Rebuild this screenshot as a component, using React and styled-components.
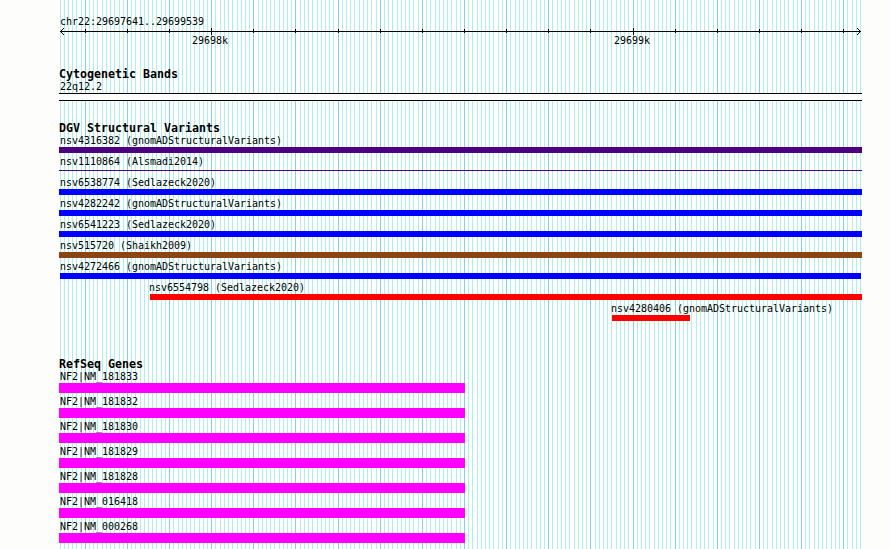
import React from 'react'
import styled, { createGlobalStyle } from 'styled-components'

const INK = '#000000'
const PAPER = '#fdfefb'
const GRID_MINOR = '#afeeee'
const GRID_MAJOR = '#87ceeb'
const LEFT = 59
const START = 29697641
const SCALE = 0.42127

const toX = bp => Math.floor(60.08 + (bp - START + 1) * SCALE)

const GlobalStyle = createGlobalStyle`
  body {
    margin: 0;
    background: ${PAPER};
    overflow: hidden;
  }
`
const Browser = styled.main`
  position: relative;
  width: 890px;
  height: 549px;
  overflow: hidden;
  background: ${PAPER};
  color: ${INK};
`
const Backdrop = styled.svg`
  position: absolute;
  top: 0;
  left: 0;
  shape-rendering: crispEdges;
`
const Tracks = styled.div`
  position: relative;
  display: flex;
  flex-direction: column;
  width: 803px;
  padding: 16px 0 0 ${LEFT}px;
`
const Label = styled.div`
  height: 12px;
  padding-left: 1px;
  font: 10px/12px 'DejaVu Sans Mono', monospace;
  letter-spacing: -0.02px;
  white-space: pre;
`
const Title = styled.h2`
  height: 13px;
  margin: 0;
  font: bold 11.63px/12px 'DejaVu Sans Mono', monospace;
  white-space: pre;
`
const Ruler = styled.section`
  height: 52px;
`
const Axis = styled.svg`
  display: block;
  margin-top: -1px;
  shape-rendering: crispEdges;
`
const Scale = styled.div`
  display: flex;
  gap: 385px;
  padding-left: 132px;
  margin-top: -1px;
`
const Bands = styled.section`
  height: 54px;
`
const Band = styled.div`
  height: 6px;
  border: solid ${INK};
  border-width: 1px 0;
  background: ${PAPER};
`
const Variants = styled.section`
  height: 236px;
`
const Variant = styled.div`
  height: 21px;
  padding-left: ${p => p.$offset || 0}px;
`
const Bar = styled.div`
  width: ${p => p.$width}px;
  height: ${p => p.$height}px;
  margin: ${p => p.$gap || 0}px 0 0 ${p => p.$inset || 0}px;
  background: ${p => p.$color};
`
const Gene = styled.div`
  height: 25px;
`

const variants = [
  { name: 'nsv4316382 (gnomADStructuralVariants)', color: '#4b0082' },
  { name: 'nsv1110864 (Alsmadi2014)', color: '#4b0082', height: 1, gap: 2 },
  { name: 'nsv6538774 (Sedlazeck2020)', color: '#0000ff' },
  { name: 'nsv4282242 (gnomADStructuralVariants)', color: '#0000ff' },
  { name: 'nsv6541223 (Sedlazeck2020)', color: '#0000ff' },
  { name: 'nsv515720 (Shaikh2009)', color: '#8b4513' },
  { name: 'nsv4272466 (gnomADStructuralVariants)', color: '#0000ff', inset: 1, width: 801 },
  { name: 'nsv6554798 (Sedlazeck2020)', color: '#ff0000', offset: 89, inset: 2, width: 712 },
  { name: 'nsv4280406 (gnomADStructuralVariants)', color: '#ff0000', offset: 551, inset: 2, width: 78 },
]
const genes = ['181833', '181832', '181830', '181829', '181828', '016418', '000268']

const positions = []
for (let bp = START - 1; bp <= 29699540; bp += 10) positions.push(bp)
const majors = positions.filter(bp => bp % 100 === 0)

const Grid = () => (
  <Backdrop width="890" height="549">
    {positions.map(bp => (
      <rect key={bp} x={toX(bp)} width="1" height="549" fill={bp % 100 === 0 ? GRID_MAJOR : GRID_MINOR} />
    ))}
  </Backdrop>
)

const Arrow = () => (
  <Axis width="803" height="9" viewBox="59 27 803 9">
    <path d="M60 31h801v1H60zM61 30h1v1h-1zM62 29h1v1h-1zM63 28h1v1h-1zM61 32h1v1h-1zM62 33h1v1h-1zM63 34h1v1h-1z" />
    <path d="M859 30h1v1h-1zM858 29h1v1h-1zM857 28h1v1h-1zM859 32h1v1h-1zM858 33h1v1h-1zM857 34h1v1h-1z" />
    {majors.map(bp => (
      <rect key={bp} x={toX(bp)} y={bp % 1000 === 0 ? 28 : 29} width="1" height={bp % 1000 === 0 ? 7 : 4} />
    ))}
  </Axis>
)

const App = () => (
  <>
    <GlobalStyle />
    <Browser>
      <Grid />
      <Tracks>
        <Ruler>
          <Label>chr22:29697641..29699539</Label>
          <Arrow />
          <Scale>
            <Label>29698k</Label>
            <Label>29699k</Label>
          </Scale>
        </Ruler>
        <Bands>
          <Title>Cytogenetic Bands</Title>
          <Label>22q12.2</Label>
          <Band />
        </Bands>
        <Variants>
          <Title>DGV Structural Variants</Title>
          {variants.map(v => (
            <Variant key={v.name} $offset={v.offset}>
              <Label>{v.name}</Label>
              <Bar $color={v.color} $width={v.width || 803} $height={v.height || 6} $inset={v.inset} $gap={v.gap} />
            </Variant>
          ))}
        </Variants>
        <section>
          <Title>RefSeq Genes</Title>
          {genes.map(id => (
            <Gene key={id}>
              <Label>{`NF2|NM_${id}`}</Label>
              <Bar $color="#ff00ff" $width={406} $height={10} />
            </Gene>
          ))}
        </section>
      </Tracks>
    </Browser>
  </>
)

export default App
